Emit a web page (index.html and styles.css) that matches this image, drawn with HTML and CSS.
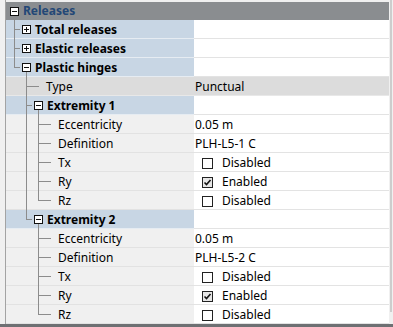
FILE: index.html
```html
<!DOCTYPE html>
<html>
<head>
<meta charset="utf-8">
<title>Releases</title>
<link rel="stylesheet" href="styles.css">
</head>
<body>
<div class="frame">
  <div class="tree">

    <div class="row head">
      <div class="name"><span class="g box down"><svg width="9" height="9"><rect x=".5" y=".5" width="8" height="8" fill="#fff" stroke="#111"/><path d="M2 4.5h5" stroke="#111"/></svg></span><span class="label">Releases</span></div>
      <div class="val"></div>
    </div>

    <div class="row group">
      <div class="name"><span class="g tee"></span><span class="g box"><svg width="9" height="9"><rect x=".5" y=".5" width="8" height="8" fill="#fff" stroke="#111"/><path d="M2 4.5h5M4.5 2v5" stroke="#111"/></svg></span><span class="label">Total releases</span></div>
      <div class="val"></div>
    </div>
    <div class="row group">
      <div class="name"><span class="g tee"></span><span class="g box"><svg width="9" height="9"><rect x=".5" y=".5" width="8" height="8" fill="#fff" stroke="#111"/><path d="M2 4.5h5M4.5 2v5" stroke="#111"/></svg></span><span class="label">Elastic releases</span></div>
      <div class="val"></div>
    </div>
    <div class="row group">
      <div class="name"><span class="g end"></span><span class="g box down"><svg width="9" height="9"><rect x=".5" y=".5" width="8" height="8" fill="#fff" stroke="#111"/><path d="M2 4.5h5" stroke="#111"/></svg></span><span class="label">Plastic hinges</span></div>
      <div class="val"></div>
    </div>

    <div class="row leaf picked">
      <div class="name"><span class="g"></span><span class="g tee"></span><span class="g stub"></span><span class="label">Type</span></div>
      <div class="val">Punctual</div>
    </div>

    <div class="row group">
      <div class="name"><span class="g"></span><span class="g tee"></span><span class="g box down"><svg width="9" height="9"><rect x=".5" y=".5" width="8" height="8" fill="#fff" stroke="#111"/><path d="M2 4.5h5" stroke="#111"/></svg></span><span class="label">Extremity 1</span></div>
      <div class="val"></div>
    </div>
    <div class="row leaf">
      <div class="name"><span class="g"></span><span class="g pipe"></span><span class="g tee"></span><span class="g stub"></span><span class="label">Eccentricity</span></div>
      <div class="val">0.05 m</div>
    </div>
    <div class="row leaf">
      <div class="name"><span class="g"></span><span class="g pipe"></span><span class="g tee"></span><span class="g stub"></span><span class="label">Definition</span></div>
      <div class="val">PLH-L5-1 C</div>
    </div>
    <div class="row leaf">
      <div class="name"><span class="g"></span><span class="g pipe"></span><span class="g tee"></span><span class="g stub"></span><span class="label">Tx</span></div>
      <div class="val check"><svg width="11" height="11"><rect x=".5" y=".5" width="10" height="10" fill="#fff" stroke="#222"/></svg><span>Disabled</span></div>
    </div>
    <div class="row leaf">
      <div class="name"><span class="g"></span><span class="g pipe"></span><span class="g tee"></span><span class="g stub"></span><span class="label">Ry</span></div>
      <div class="val check"><svg width="11" height="11"><rect x=".5" y=".5" width="10" height="10" fill="#e6e6e6" stroke="#222"/><path d="M2.5 5.5l2 2 4-4.5" fill="none" stroke="#111" stroke-width="1.6"/></svg><span>Enabled</span></div>
    </div>
    <div class="row leaf">
      <div class="name"><span class="g"></span><span class="g pipe"></span><span class="g end"></span><span class="g stub"></span><span class="label">Rz</span></div>
      <div class="val check"><svg width="11" height="11"><rect x=".5" y=".5" width="10" height="10" fill="#fff" stroke="#222"/></svg><span>Disabled</span></div>
    </div>

    <div class="row group">
      <div class="name"><span class="g"></span><span class="g end"></span><span class="g box down"><svg width="9" height="9"><rect x=".5" y=".5" width="8" height="8" fill="#fff" stroke="#111"/><path d="M2 4.5h5" stroke="#111"/></svg></span><span class="label">Extremity 2</span></div>
      <div class="val"></div>
    </div>
    <div class="row leaf">
      <div class="name"><span class="g"></span><span class="g"></span><span class="g tee"></span><span class="g stub"></span><span class="label">Eccentricity</span></div>
      <div class="val">0.05 m</div>
    </div>
    <div class="row leaf">
      <div class="name"><span class="g"></span><span class="g"></span><span class="g tee"></span><span class="g stub"></span><span class="label">Definition</span></div>
      <div class="val">PLH-L5-2 C</div>
    </div>
    <div class="row leaf">
      <div class="name"><span class="g"></span><span class="g"></span><span class="g tee"></span><span class="g stub"></span><span class="label">Tx</span></div>
      <div class="val check"><svg width="11" height="11"><rect x=".5" y=".5" width="10" height="10" fill="#fff" stroke="#222"/></svg><span>Disabled</span></div>
    </div>
    <div class="row leaf">
      <div class="name"><span class="g"></span><span class="g"></span><span class="g tee"></span><span class="g stub"></span><span class="label">Ry</span></div>
      <div class="val check"><svg width="11" height="11"><rect x=".5" y=".5" width="10" height="10" fill="#e6e6e6" stroke="#222"/><path d="M2.5 5.5l2 2 4-4.5" fill="none" stroke="#111" stroke-width="1.6"/></svg><span>Enabled</span></div>
    </div>
    <div class="row leaf">
      <div class="name"><span class="g"></span><span class="g"></span><span class="g end"></span><span class="g stub"></span><span class="label">Rz</span></div>
      <div class="val check"><svg width="11" height="11"><rect x=".5" y=".5" width="10" height="10" fill="#fff" stroke="#222"/></svg><span>Disabled</span></div>
    </div>

  </div>
  <div class="scroll"><div class="thumb"></div></div>
</div>
</body>
</html>
```

FILE: styles.css
```css
body { margin: 0; width: 393px; height: 327px; overflow: hidden; background: #f0f0f0;
  font-family: "Noto Sans", "DejaVu Sans", sans-serif; font-size: 12px; color: #000; }

.frame { display: flex; height: 324px; border-bottom: 3px solid #6e7073; }
.tree { width: 383px; margin-left: 5px; border-left: 1px solid #a3a3a3; padding-top: 2px; }
.scroll { width: 3px; padding-left: 1px; box-sizing: border-box; }
.thumb { height: 312px; background: #cdcdcd; }

.row { display: flex; height: 19px; line-height: 18px; }
.row.head { height: 18px; background: #8a8d90; }
.name { width: 186px; padding-left: 2px; display: flex; flex-shrink: 0; white-space: nowrap;
  background: linear-gradient(#e2e2e2, #e2e2e2) 0 100% / 100% 1px no-repeat, #f0f0f0; }
.val { flex: 1; padding: 1px 0 0 1px; white-space: nowrap;
  background: linear-gradient(#e3e3e3, #e3e3e3) 0 100% / 100% 1px no-repeat, #fff; }
.label { padding-top: 1px; }

.head .name, .head .val { background: none; }
.head .label { color: #234776; font-weight: bold; padding-top: 0; }
.group .name { background: linear-gradient(#e6ecf2, #e6ecf2) 0 100% / 100% 1px no-repeat, #c8d6e4; }
.group .label, .head .label { margin-left: 3px; font-weight: bold; }
.leaf .label { margin-left: 2px; }
.picked .name, .picked .val { background: linear-gradient(#e8e8e8, #e8e8e8) 0 100% / 100% 1px no-repeat, #dcdcdc; }

/* tree guides, 12px per level, line at 6px */
.g { width: 12px; height: 19px; flex-shrink: 0; }
.pipe { background: linear-gradient(#8c8c8c, #8c8c8c) 6px 0 / 1px 100% no-repeat; }
.tee { background: linear-gradient(#8c8c8c, #8c8c8c) 6px 0 / 1px 100% no-repeat,
  linear-gradient(#8c8c8c, #8c8c8c) 6px 9px / 6px 1px no-repeat; }
.end { background: linear-gradient(#8c8c8c, #8c8c8c) 6px 0 / 1px 10px no-repeat,
  linear-gradient(#8c8c8c, #8c8c8c) 6px 9px / 6px 1px no-repeat; }
.stub { background: linear-gradient(#8c8c8c, #8c8c8c) 0 9px / 7px 1px no-repeat; }
.box { padding: 5px 0 0 2px; box-sizing: border-box; }
.box svg { display: block; }
.box.down { background: linear-gradient(#8c8c8c, #8c8c8c) 6px 9px / 1px 10px no-repeat; }

.check { display: flex; align-items: center; padding-left: 8px; padding-top: 0; }
.check svg { flex-shrink: 0; margin-top: 1px; }
.check span { margin-left: 9px; padding-top: 1px; }
```
